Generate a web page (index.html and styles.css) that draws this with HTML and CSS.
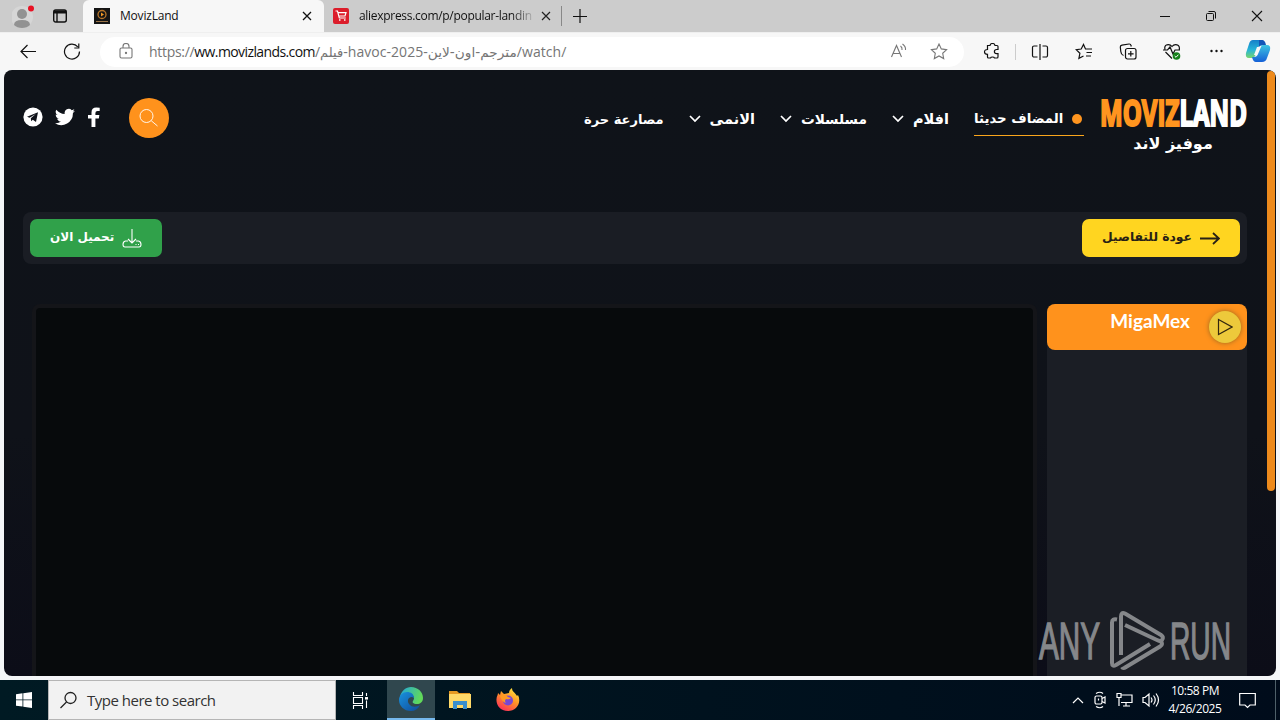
FILE: index.html
```html
<!DOCTYPE html>
<html lang="en">
<head>
<meta charset="utf-8">
<title>MovizLand</title>
<link rel="stylesheet" href="styles.css">
</head>
<body>
<div class="desktop">
  <div class="tabbar">
    <div class="tab-tools">
      <svg class="avatar" width="24" height="28" viewBox="0 0 24 28"><circle cx="10" cy="15" r="11" fill="#d6d6d6"/><circle cx="10" cy="12" r="5" fill="#929292"/><path d="M2 23q0-5 8-5t8 5q-3 3-8 3t-8-3z" fill="#929292"/><circle cx="19" cy="6.500" r="3" fill="#e81123"/></svg>
      <svg class="workspace" width="16" height="16" viewBox="0 0 16 16" fill="none" stroke="#111" stroke-width="1.400"><rect x="1.700" y="2" width="12.600" height="12" rx="2"/><path d="M2 4h12" stroke-width="3"/><path d="M5 5v9"/></svg>
    </div>
    <div class="tab active">
      <svg class="favicon" width="16" height="16" viewBox="0 0 16 16"><path fill="#151515" d="M0 0h16v16H0z"/><circle cx="8" cy="6.500" r="4" fill="none" stroke="#b8762a" stroke-width="1.300"/><path d="M7 4.500l3 2-3 2z" fill="#f59a25"/><path d="M2 13.500h12" stroke="#997348"/></svg>
      <span class="tab-title">MovizLand</span>
      <svg class="close" width="10" height="10" viewBox="0 0 10 10"><path d="M1 1l8 8M9 1L1 9" stroke="#111" stroke-width="1.300"/></svg>
    </div>
    <div class="tab inactive">
      <svg class="favicon" width="16" height="16" viewBox="0 0 16 16"><rect width="16" height="16" rx="2" fill="#dc1d2b"/><path d="M2.500 3h2l1.800 7h6.500M5 4.700h8L12 8H5.800" fill="none" stroke="#fff" stroke-width="1.200"/><path d="M6 12h1.500M11 12h1.500" stroke="#fff" stroke-width="1.600"/></svg>
      <span class="tab-title fade">aliexpress.com/p/popular-landin</span>
      <svg class="close" width="10" height="10" viewBox="0 0 10 10"><path d="M1 1l8 8M9 1L1 9" stroke="#222" stroke-width="1.200"/></svg>
    </div>
    <svg class="new-tab" width="14" height="14" viewBox="0 0 14 14"><path d="M7 0v14M0 7.500h14" stroke="#111" stroke-width="1.200"/></svg>
    <div class="window-controls">
      <svg width="12" height="12" viewBox="0 0 12 12"><path d="M1 6.500h10" stroke="#111"/></svg>
      <svg width="12" height="12" viewBox="0 0 12 12" fill="none" stroke="#111"><rect x="1.500" y="3.500" width="7" height="7" rx="1"/><path d="M3.500 1.500H9q1.500 0 1.500 1.500v5.500"/></svg>
      <svg width="12" height="12" viewBox="0 0 12 12"><path d="M1 1l10 10M11 1L1 11" stroke="#111" stroke-width="1.100"/></svg>
    </div>
  </div>

  <div class="toolbar">
    <svg class="back" width="18" height="16" viewBox="0 0 18 16" fill="none" stroke="#111" stroke-width="1.200"><path d="M17 7.500H2M8.500 1L2 7.500 8.500 14"/></svg>
    <svg class="reload" width="18" height="18" viewBox="0 0 18 18" fill="none" stroke="#111" stroke-width="1.200"><path d="M16.500 8.500A7.500 7.500 0 1 1 14.800 3.800M15.800 .5V5h-4.500"/></svg>
    <div class="address">
      <svg class="lock" width="14" height="17" viewBox="0 0 14 17" fill="none" stroke="#777" stroke-width="1.100"><rect x="1" y="5" width="12" height="10" rx="1.500"/><path d="M4 5V3.500a3 3 0 0 1 6 0V5"/><circle cx="7" cy="10" r=".6"/></svg>
      <div class="url"><span class="scheme">https://</span><b>ww.movizlands.com</b><span>/</span><bdi>فيلم</bdi><span>-havoc-2025-</span><bdi class="slug">مترجم-اون-لاين</bdi><span>/watch/</span></div>
      <svg class="read" width="18" height="18" viewBox="0 0 18 18" fill="none" stroke="#777" stroke-width="1.100"><path d="M1.500 14L6.500 2.500l5 11.500M3.200 10.500h6.600M10.500 3q2 1.500 1.500 4M12.500 1q3.500 2.500 3 6"/></svg>
      <svg class="star" width="18" height="18" viewBox="0 0 18 18" fill="none" stroke="#777" stroke-width="1.100"><path d="M9 1l2.300 4.900 5.300.7-3.900 3.700 1 5.300L9 13l-4.700 2.600 1-5.300L1.400 6.600l5.300-.7z"/></svg>
    </div>
    <div class="tool-icons">
      <svg width="18" height="18" viewBox="0 0 18 18" fill="none" stroke="#111" stroke-width="1.200"><path d="M4.500 2.500H7q.3-2 2.500-2t2.500 2h2q1 0 1 1v3h-1.500a2 2 0 0 0 0 4.200H15v3q0 1.300-1 1.300h-2.500q-.3-1-2-1t-2 1h-2q-1 0-1-1v-2.700q-3 0-3-2.400t3-2.400z"/></svg>
      <i class="divider"></i>
      <svg width="18" height="18" viewBox="0 0 18 18" fill="none" stroke="#111" stroke-width="1.200"><path d="M9 1v16M6.500 3H3A1.500 1.500 0 0 0 1.500 4.500v8A1.500 1.500 0 0 0 3 14h3.500M11.500 3H15a1.500 1.500 0 0 1 1.500 1.500v8A1.500 1.500 0 0 1 15 14h-3.500"/></svg>
      <svg width="18" height="18" viewBox="0 0 18 18" fill="none" stroke="#111" stroke-width="1.200"><path d="M11 6h-.500L8.500 1.500 6.200 6l-5 .7 3.700 3.600-1 5L8.500 13M10.500 6H17M11.500 9.500H17M11 13h5"/></svg>
      <svg width="18" height="18" viewBox="0 0 18 18" fill="none" stroke="#111" stroke-width="1.200"><rect x="6.500" y="5.500" width="10.500" height="10.500" rx="2"/><path d="M11.800 8v5.500M9 10.800h5.600M4.500 12.500Q2 11.500 1.800 8.500L1.300 4Q1.300 2.500 3 2.200L10 1q1.700-.2 2 1.500l.3 1"/></svg>
      <svg width="18" height="18" viewBox="0 0 18 18" fill="none" stroke="#111" stroke-width="1.200"><path d="M9 15.500L2.500 9M2 6.500Q1 3 4 1.800 7 1 9 3.500q2-2.500 5-1.700 3 1.200 2.300 5M0 7h4.500L7 4l3 7 2-4h5"/><circle cx="13.500" cy="13" r="3.800" fill="#16811b" stroke="none"/><path d="M11.700 13l1.300 1.300 2.400-2.600" stroke="#fff" stroke-width="1"/></svg>
      <svg width="18" height="18" viewBox="0 0 18 18" fill="#111"><circle cx="3.500" cy="8" r="1.200"/><circle cx="8.500" cy="8" r="1.200"/><circle cx="13.500" cy="8" r="1.200"/></svg>
    </div>
    <svg class="copilot" width="26" height="24" viewBox="0 0 26 24">
      <defs><linearGradient id="cpA" x1="0" y1="0" x2="0" y2="1"><stop offset="0" stop-color="#157fc9"/><stop offset=".55" stop-color="#27b5d8"/><stop offset="1" stop-color="#78d56c"/></linearGradient><linearGradient id="cpB" x1="0" y1="0" x2="0" y2="1"><stop offset="0" stop-color="#3ec4e2"/><stop offset="1" stop-color="#1560d7"/></linearGradient></defs>
      <path d="M8 0h8q3 0 4 5l-6 1-3.500 9q-1 3-4 3H4q-4 0-3-5L4 4q1-4 4-4z" fill="url(#cpA)"/><path d="M18 5h4q4 0 3 5l-3 8q-1 4-5 4h-6q-3 0-4-5h2q3 0 4-3l3-7q.5-2 2-2z" fill="url(#cpB)"/><path d="M14 0h3q3 0 4 5h-4q-2 0-3 2z" fill="#1456b8"/><path d="M12 7h3l-3 8H9z" fill="#f7f7f7"/>
    </svg>
  </div>

  <main class="site">
    <header class="site-header">
      <div class="social">
        <svg width="20" height="20" viewBox="0 0 20 20"><circle cx="10" cy="10" r="9.600" fill="#fff"/><path d="M4 9.800L15 5.300l-2 9.700-3.200-2.300-1.600 1.600-.4-3L12.800 7l-6.300 3.800z" fill="#10131a"/></svg>
        <svg width="20" height="20" viewBox="0 0 24 24"><path fill="#fff" d="M23.900 4.600a10 10 0 0 1-2.800.8 5 5 0 0 0 2.100-2.700 10 10 0 0 1-3.100 1.200 4.900 4.900 0 0 0-8.400 4.500A14 14 0 0 1 1.600 3.200a4.900 4.900 0 0 0 1.500 6.500 5 5 0 0 1-2.200-.6 4.900 4.900 0 0 0 3.900 4.900 5 5 0 0 1-2.200.1 4.900 4.900 0 0 0 4.600 3.400A10 10 0 0 1 0 19.500a14 14 0 0 0 21.500-12.400 10 10 0 0 0 2.400-2.500z"/></svg>
        <svg class="facebook" width="12" height="20" viewBox="0 0 12 20"><path fill="#fff" d="M3.500 20v-8.500H0V8h3.500V5.400Q3.500.5 8.300.5q2 0 3.400.3v3.100H9.500Q7.400 3.900 7.400 6v2h4l-.6 3.500H7.400V20z"/></svg>
      </div>
      <div class="search-button"><svg width="20" height="20" viewBox="0 0 20 20" fill="none" stroke="#fff" stroke-width=".9"><circle cx="7.500" cy="8" r="6.500"/><path d="M12.200 12.700L18.500 18"/></svg></div>
      <nav class="menu">
        <span class="entry w80"><bdi>مصارعة حرة</bdi></span>
        <span class="entry w66"><svg width="12" height="8" viewBox="0 0 12 8"><path d="M1 1l5 5 5-5"/></svg><bdi>الانمى</bdi></span>
        <span class="entry w86"><svg width="12" height="8" viewBox="0 0 12 8"><path d="M1 1l5 5 5-5"/></svg><bdi>مسلسلات</bdi></span>
        <span class="entry w56"><svg width="12" height="8" viewBox="0 0 12 8"><path d="M1 1l5 5 5-5"/></svg><bdi>افلام</bdi></span>
        <span class="entry current"><bdi>المضاف حديثا</bdi><i class="dot"></i></span>
      </nav>
      <div class="brand">
        <svg width="148" height="31" viewBox="0 0 148 31"><text class="wordmark" x="1" y="28" textLength="147" lengthAdjust="spacingAndGlyphs"><tspan class="orange">MOVIZ</tspan><tspan class="white">LAND</tspan></text></svg>
        <bdi class="brand-ar">موفيز لاند</bdi>
      </div>
    </header>
    <div class="actions">
      <div class="button download"><bdi>تحميل الان</bdi><svg width="20" height="20" viewBox="0 0 20 20" fill="none" stroke="#fff" stroke-width="1.100"><path d="M10 1v14M6 11l4 4 4-4M6 13H3.500Q1 13.500 1 16.500 1 19 3 19h14q2 0 2-2.500 0-3-2.500-3.500H14M13.500 16.500h1M16 16.500h1"/></svg></div>
      <div class="button details"><bdi>عودة للتفاصيل</bdi><svg width="20" height="14" viewBox="0 0 20 14" fill="none" stroke="#282115" stroke-width="1.800"><path d="M0 7.500h19M13 2l6 5.500-6 5.500"/></svg></div>
    </div>
    <div class="watch">
      <div class="player"></div>
      <aside class="servers"><div class="server"><span>MigaMex</span><i class="play"><svg width="16" height="18" viewBox="0 0 16 18"><path d="M1.500 1.500v15L15 9z" fill="none" stroke="#33270f" stroke-width="1.200"/></svg></i></div></aside>
    </div>
    <i class="scroll-thumb"></i>
    <svg class="watermark" width="196" height="64" viewBox="0 0 196 64">
      <text class="mark-text" x="1" y="51" textLength="61" lengthAdjust="spacingAndGlyphs">ANY</text>
      <text class="mark-text" x="132" y="51" textLength="61" lengthAdjust="spacingAndGlyphs">RUN</text>
      <g fill="none" stroke="#85878a" stroke-width="4" transform="translate(0 2)"><path d="M79 9.500q-5-1-5 3V53q0 4 4 2l34-21"/><path d="M83 45V6.500q0-5 4-3l36 21.500q3 2 1 5-1 2-5 0L87 15"/><path d="M122 31q4 3 0 5.500L88 57q-3 2-4 0"/></g>
    </svg>
  </main>

  <footer class="taskbar">
    <svg class="windows" width="16" height="16" viewBox="0 0 16 16" fill="#fff"><path d="M0 2.200L6.500 1.300v6.200H0zM7.300 1.200L16 0v7.500H7.300zM0 8.300h6.500v6.300L0 13.700zM7.300 8.300H16V16l-8.700-1.200z"/></svg>
    <div class="task-search"><svg width="18" height="18" viewBox="0 0 18 18" fill="none" stroke="#222" stroke-width="1.300"><circle cx="10.500" cy="7" r="5.500"/><path d="M6.500 11L.5 17"/></svg><span>Type here to search</span></div>
    <div class="task-item view"><svg width="17" height="17" viewBox="0 0 17 17" fill="none" stroke="#fff" stroke-width="1.100"><path d="M1.500 0v3.500h9V0M1.500 17v-3.500h9V17M1.500 5.500h9v6h-9zM14.500 1v3M14.500 8.500V16"/><path d="M13 6.300h3" stroke-width="2.500"/></svg></div>
    <div class="task-item running"><svg width="24" height="24" viewBox="0 0 24 24"><defs><linearGradient id="edA" x1="0" y1="0" x2="1" y2=".3"><stop stop-color="#20a6df"/><stop offset="1" stop-color="#61d95a"/></linearGradient><linearGradient id="edB" x1="0" y1="0" x2="1" y2="1"><stop stop-color="#1992de"/><stop offset="1" stop-color="#104a99"/></linearGradient></defs><path fill="url(#edA)" d="M1 10C2 4 7 0 12 0c7 0 12 5 12 11 0 4-3 6-6 6-4 0-5-2-4-3 3-4-1-7-5-7-4 0-7 1-8 3z"/><path fill="url(#edB)" d="M0 13c0-5 4-8 8-8 4 0 7 2 7 6-4-3-8 2-5 6 3 4 8 3 11 1-2 4-5 6-9 6C5 24 0 19 0 13z"/></svg></div>
    <div class="task-item files"><svg width="22" height="20" viewBox="0 0 22 20"><path d="M0 1h8l2 2h11v4H0z" fill="#e69a22"/><path d="M0 4h22v14H0z" fill="#ffd968"/><path d="M4 19v-8h14v8h-4v-4H8v4z" fill="#3a8fce"/></svg></div>
    <div class="task-item firefox"><svg width="24" height="24" viewBox="0 0 24 24"><defs><linearGradient id="ff" x1=".8" y1="0" x2=".2" y2="1"><stop stop-color="#ffe83f"/><stop offset=".45" stop-color="#ff9426"/><stop offset="1" stop-color="#fb285d"/></linearGradient></defs><path fill="url(#ff)" d="M2 5l2 2 1-4 3 3 5-1c0-3 2-4 3-5 0 4 3 4 5 8l1-1c4 8-2 16-10 16C4 23 0 17 .5 11 .7 8 2 7 2 5z"/><circle cx="12" cy="12.500" r="5" fill="#7847d3"/><path d="M4 8q5-3 8 1l3 1q-2 2-5 1-2 2 0 4-4-1-6-7z" fill="#ff9a22"/></svg></div>
    <div class="tray">
      <svg width="12" height="8" viewBox="0 0 12 8"><path d="M1 7l5-5 5 5"/></svg>
      <svg width="14" height="18" viewBox="0 0 14 18"><rect x="2" y="5" width="7" height="8" rx="1.500"/><path d="M9 7.500l3-1.500v6l-3-1.500M3 2.500q4-2.500 7 0M3 15.500q4 2.500 7 0M5.500 7.500v2"/></svg>
      <svg width="17" height="16" viewBox="0 0 17 16"><path d="M5 3h11v7.500H5M10 11v3M7 14h7M1 1.500h4v4H1zM3 5.500V14"/></svg>
      <svg width="18" height="16" viewBox="0 0 18 16"><path d="M1 5.500h2L7 2v12l-4-3.500H1zM9 5.500q2 2.500 0 5M11.500 3.500q3.500 4.500 0 9M14 1.500q5 6.500 0 13"/></svg>
    </div>
    <div class="clock"><span>10:58 PM</span><span>4/26/2025</span></div>
    <svg class="notice" width="17" height="17" viewBox="0 0 17 17"><path d="M.7 1.500h15.600v11.500h-5.300L8.500 15.500 6 13H.7z" fill="none" stroke="#fff" stroke-width="1.200"/></svg>
    <i class="show-desktop"></i>
  </footer>
</div>
</body>
</html>
```

FILE: styles.css
```css
* { box-sizing: border-box; }
body { margin: 0; background: #f7f7f7; font-family: "Open Sans", "Noto Sans", "DejaVu Sans", sans-serif; }
svg { display: block; flex: none; }
.desktop { width: 1280px; height: 720px; display: grid; grid-template-rows: 32px 38px 606px 4px 40px; overflow: hidden; background: #f4f6f8; }
.tabbar { display: flex; background: #ccc; align-items: stretch; }
.tab-tools { width: 83px; padding-left: 12px; display: flex; align-items: center; gap: 16px; }
.tab { display: flex; align-items: center; font-size: 12px; color: #111; white-space: nowrap; }
.tab.active { width: 241px; background: #f7f7f7; border-radius: 6px 6px 0 0; padding: 0 12px 0 11px; }
.tab.inactive { width: 238px; padding: 0 11px 0 9px; background: linear-gradient(#888, #888) right 6px/1px 20px no-repeat; }
.tab-title { flex: 1; margin-left: 10px; letter-spacing: -.2px; line-height: 18px; padding-bottom: 1px; }
.fade { letter-spacing: -.3px; margin-right: 5px; mask-image: linear-gradient(to right, #000 86%, transparent); }
.new-tab { align-self: center; margin-left: 11px; }
.window-controls { display: flex; align-items: center; gap: 34px; margin-left: auto; padding-right: 17px; }
.toolbar { display: flex; align-items: center; background: #f7f7f7; padding-left: 19px; border-top: 1px solid #efefef; }
.reload { margin-left: 26px; }
.address { width: 864px; height: 30px; margin-left: 19px; border-radius: 15px; background: #fff; display: flex; align-items: center; padding: 0 16px 0 19px; }
.url { width: 422px; margin-left: 16px; display: flex; align-items: baseline; color: #757575; font-size: 14px; letter-spacing: .05px; white-space: nowrap; flex: none; }
.url .scheme { letter-spacing: -.3px; }
.url b { font-weight: 400; color: #111; letter-spacing: -.6px; }
.url bdi { font-family: "DejaVu Sans", sans-serif; font-size: 13px; letter-spacing: 0; }
.url .slug { font-size: 13.700px; }
.read { margin-left: auto; }
.star { margin-left: 22px; }
.tool-icons { display: flex; align-items: center; gap: 26.300px; margin-left: 19px; }
.divider { width: 1px; height: 16px; background: #ccc; margin: 0 -12px; }
.copilot { margin-left: 19px; }
.site { position: relative; margin: 0 4px; overflow: hidden; border-radius: 8px; background: linear-gradient(#0f1319 0%, #0f1219 60%, #0c0d18 100%); padding: 28px 29px 0 19px; display: grid; grid-template-rows: 114px 52px 372px; }
.site-header { display: flex; align-items: flex-start; }
.social { display: flex; gap: 12px; width: 78px; padding-top: 9px; }
.facebook { margin-left: 1px; }
.search-button { width: 40px; height: 40px; margin-left: 28px; border-radius: 50%; background: #ff921c; display: grid; place-items: center; }
.menu { display: flex; gap: 25px; width: 500px; height: 38px; margin-left: 415px; font-family: "DejaVu Sans", sans-serif; font-size: 14px; font-weight: 700; color: #fff; }
.entry { display: flex; justify-content: space-between; align-items: center; white-space: nowrap; height: 38px; padding-top: 4px; flex: none; }
.entry svg { fill: none; stroke: #fff; stroke-width: 1.700; }
.w80 { width: 80px; font-size: 13px; }
.w66 { width: 66px; font-size: 14.500px; }
.w86 { width: 87px; font-size: 13.700px; }
.w56 { width: 57px; font-size: 14.500px; }
.current { width: 110px; font-size: 13.300px; border-bottom: 1px solid #f9a51c; }
.dot { width: 10px; height: 10px; border-radius: 50%; background: #ff951f; margin-right: 2px; }
.brand { width: 148px; margin-left: 15px; display: flex; flex-direction: column; align-items: center; color: #fff; }
.wordmark { font: 700 36px "Liberation Sans Narrow", "Open Sans", "Liberation Sans", sans-serif; stroke-width: 2.200; }
.orange { fill: #ff951f; stroke: #ff951f; }
.white { fill: #fff; stroke: #fff; }
.brand svg { overflow: visible; }
.brand-ar { font: 700 16px/20px "DejaVu Sans", sans-serif; margin-top: 5px; }
.actions { display: flex; align-items: center; justify-content: space-between; padding: 0 7px; background: #1a1d24; border-radius: 8px; }
.button { height: 38px; border-radius: 7px; display: flex; align-items: center; justify-content: space-between; padding: 0 20px; font: 700 12px "DejaVu Sans", sans-serif; white-space: nowrap; }
.download { width: 132px; background: #30a14a; color: #fff; }
.details { width: 158px; background: #ffd520; color: #282115; font-size: 12.300px; }
.button bdi { padding-bottom: 3px; }
.watch { margin-top: 40px; display: flex; height: 372px; }
.player { width: 1005px; margin-left: 9px; border: 4px solid #141519; border-bottom: 0; border-radius: 8px 8px 0 0; background: #070a0c; }
.servers { width: 200px; margin-left: 10px; background: #1b1e25; border-radius: 8px 8px 0 0; }
.server { height: 46px; background: #ff921c; border-radius: 8px; color: #fff; display: flex; justify-content: flex-end; padding: 7px 6px 0; font: 700 19px/20px Lato, sans-serif; }
.play { display: grid; place-items: center; width: 32px; height: 32px; margin-left: 19px; border-radius: 50%; background: #edc93b; box-shadow: 0 0 5px #9a681f; }
.scroll-thumb { position: absolute; right: 1px; top: 1px; width: 8px; height: 420px; border-radius: 4px; background: #ed8a1c; }
.watermark { position: absolute; left: 1034px; top: 538px; overflow: visible; }
.mark-text { font: 400 51px "Liberation Sans Narrow", "Liberation Sans", sans-serif; fill: #85878a; stroke: #85878a; stroke-width: 1.400; }
.taskbar { grid-row: 5; display: flex; align-items: center; background: linear-gradient(90deg, #001a23, #00121e 55%, #000c1b); color: #fff; }
.windows { margin: 0 16px; }
.task-search { width: 288px; height: 40px; border: 1px solid #b5b5b5; background: #f2f2f2; color: #333; display: flex; align-items: center; gap: 9px; padding-left: 11px; font-size: 15px; letter-spacing: -.5px; }
.task-item { width: 49px; height: 40px; display: grid; place-items: center; }
.view { width: 51px; padding-right: 3px; }
.running { width: 48px; background: #30474e; border-bottom: 2px solid #76b9ed; }
.files { width: 49px; }
.firefox { width: 48px; }
.tray { display: flex; align-items: center; gap: 9px; margin-left: auto; }
.tray path, .tray rect { fill: none; stroke: #fff; stroke-width: 1.200; }
.clock { width: 62px; margin-left: 4px; display: grid; text-align: center; font-size: 12px; line-height: 18px; letter-spacing: -.45px; white-space: nowrap; }
.notice { margin-left: 13px; }
.show-desktop { width: 1px; height: 40px; margin: 0 4px 0 19px; background: #4e6069; }
```
